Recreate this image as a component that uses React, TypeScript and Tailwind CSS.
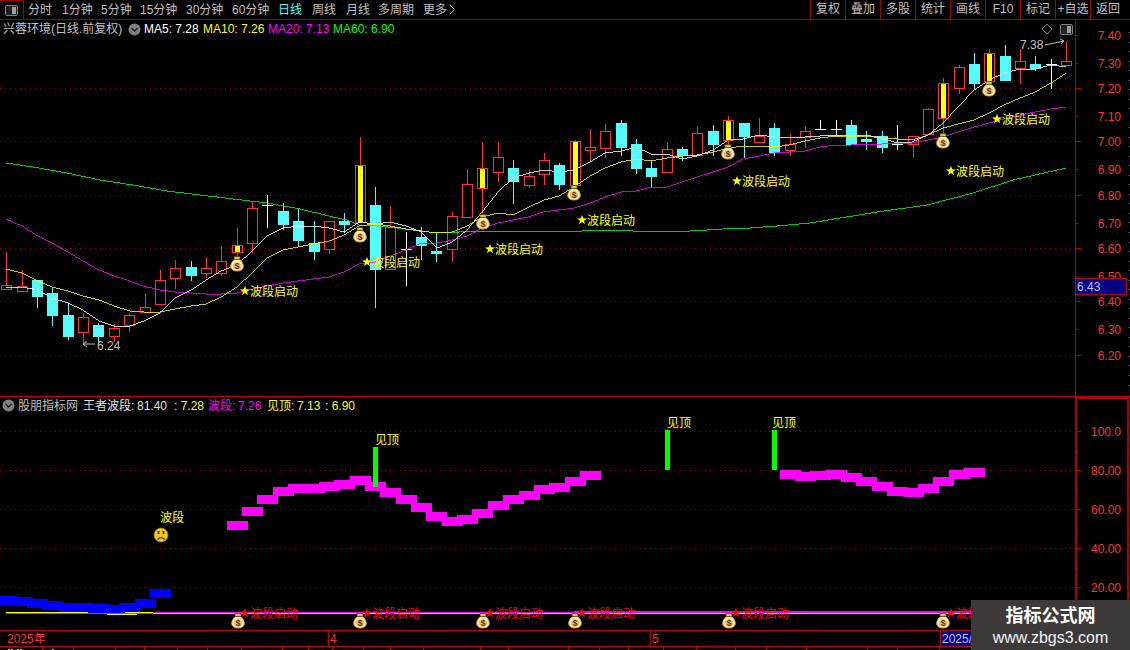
type Kind = "r" | "c" | "y" | "w";
type Candle = [number, number, number, number, Kind];

// hi, body top, body bottom, lo (all in page pixels)
const candles: Candle[] = [
  [252, 285, 289, 289, "r"], [270, 286, 291, 291, "r"], [280, 280, 296, 307, "c"], [288, 293, 315, 325, "c"],
  [303, 315, 336, 339, "c"], [313, 317, 332, 343, "r"], [323, 325, 336, 343, "c"], [324, 328, 336, 341, "r"],
  [313, 315, 325, 331, "r"], [294, 307, 312, 312, "r"], [270, 280, 304, 304, "r"], [260, 268, 278, 288, "r"],
  [261, 267, 275, 280, "c"], [257, 268, 273, 277, "r"], [246, 261, 273, 275, "r"], [228, 245, 252, 257, "y"],
  [202, 208, 243, 252, "r"], [195, 205, 205, 227, "w"], [203, 211, 224, 229, "c"], [208, 221, 240, 245, "c"],
  [221, 243, 251, 259, "c"], [221, 221, 249, 253, "r"], [213, 221, 224, 232, "c"], [137, 165, 222, 222, "y"],
  [187, 205, 269, 307, "c"], [206, 227, 269, 269, "r"], [232, 249, 249, 285, "w"], [227, 237, 245, 259, "c"],
  [233, 251, 253, 261, "c"], [212, 216, 249, 261, "r"], [169, 184, 217, 217, "r"], [142, 168, 188, 213, "y"],
  [142, 157, 172, 181, "r"], [160, 168, 181, 203, "c"], [169, 176, 185, 187, "r"], [153, 160, 174, 184, "r"],
  [163, 165, 184, 189, "c"], [140, 141, 185, 185, "y"], [129, 147, 150, 160, "r"], [124, 131, 148, 157, "r"],
  [120, 123, 147, 155, "c"], [139, 144, 168, 173, "c"], [160, 168, 176, 187, "c"], [142, 149, 172, 172, "r"],
  [147, 149, 155, 160, "c"], [126, 133, 155, 155, "r"], [125, 131, 144, 155, "c"], [116, 120, 140, 147, "y"],
  [123, 123, 136, 157, "c"], [118, 136, 142, 142, "r"], [123, 128, 152, 155, "c"], [134, 144, 150, 155, "r"],
  [126, 131, 137, 147, "r"], [120, 129, 129, 129, "w"], [120, 129, 129, 135, "w"], [120, 125, 144, 144, "c"],
  [131, 139, 141, 149, "c"], [131, 136, 147, 152, "c"], [125, 144, 144, 149, "w"], [136, 136, 144, 157, "r"],
  [108, 109, 134, 134, "r"], [78, 83, 118, 135, "y"], [65, 67, 88, 93, "r"], [53, 64, 83, 88, "c"],
  [49, 53, 81, 81, "y"], [45, 56, 80, 80, "c"], [49, 61, 68, 83, "r"], [56, 64, 68, 70, "c"],
  [59, 64, 64, 88, "w"], [41, 61, 65, 65, "r"],
];

const cx = (i: number) => Math.round(6.3 + 15.36 * i);

const ma5 = "6,287 22,287 38,290 52,298 68,303 83,310 99,321 114,326 130,326 144,321 160,313 175,298 191,290 206,280 221,271 237,265 253,250 267,236 283,228 298,226 313,226 329,228 344,232 359,222 375,224 390,222 406,226 421,232 437,248 452,242 467,230 482,212 498,192 513,178 529,173 544,170 559,172 574,170 590,162 605,153 621,151 636,147 651,154 667,154 682,159 697,156 713,150 728,140 743,139 759,135 774,137 789,138 805,137 820,136 836,135 851,136 866,135 882,138 897,143 912,142 928,135 943,123 958,107 974,90 989,80 1004,73 1020,69 1035,69 1051,65 1066,67";
const ma10 = "6,269 22,273 38,281 52,287 68,291 83,296 99,300 114,306 130,311 144,312 160,312 175,309 191,306 206,304 221,297 237,287 253,272 267,258 283,250 298,247 313,244 329,241 344,235 359,226 375,224 390,226 406,229 421,231 437,233 452,232 467,226 482,217 498,213 513,215 529,207 544,200 559,196 574,187 590,176 605,168 621,162 636,159 651,161 667,158 682,156 697,155 713,152 728,148 743,146 759,146 774,147 789,145 805,141 820,138 836,136 851,136 866,136 882,138 897,139 912,140 928,135 943,128 958,124 974,120 989,113 1004,105 1020,98 1035,92 1051,83 1066,73";
const ma20 = "6,219 22,226 38,236 52,243 68,252 83,261 99,270 114,276 127,280 143,286 160,290 175,292 191,293 206,294 221,294 237,293 253,289 267,286 283,283 298,281 313,279 329,277 344,272 359,264 375,262 390,256 406,250 421,243 437,243 452,240 467,236 482,228 498,223 513,220 528,217 543,212 559,210 574,208 590,203 605,197 621,192 636,191 651,187 667,187 682,182 697,177 713,172 728,167 743,159 759,156 774,153 789,152 805,151 820,147 836,145 851,145 866,144 882,144 897,143 912,143 928,140 943,137 958,132 974,127 989,123 1004,119 1020,115 1035,112 1051,109 1066,107";
const ma60 = "6,163 33,167 67,173 100,180 133,185 167,191 200,195 233,199 267,203 300,209 333,217 347,220 359,225 380,226 413,230 437,233 480,231 550,231 557,232 582,231 628,230 633,231 690,231 723,229 750,228 777,226 810,223 828,220 877,212 927,205 973,193 1013,180 1066,168";

const mainGrid = [88, 141, 195, 248, 301, 355];
const subGrid = [431, 470, 509, 548, 587];

const startLabels: [number, number][] = [[245, 291], [367, 262], [490, 249], [582, 220], [737, 181], [951, 171], [997, 119]];
const mainBags: [number, number][] = [[237, 264], [360, 235], [483, 222], [574, 193], [728, 152], [943, 141], [989, 89]];
const subBags = [238, 360, 483, 575, 729, 943];

const blueBars: [number, number][] = [[0, 596], [1, 597], [2, 599], [3, 601], [4, 603], [5, 603], [6, 604], [7, 605], [8, 603], [9, 599], [10, 589]];
const pinkBars: [number, number][] = [
  [15, 521], [16, 507], [17, 495], [18, 487], [19, 484], [20, 484], [21, 482], [22, 480], [23, 476], [24, 482], [25, 488],
  [26, 495], [27, 503], [28, 512], [29, 517], [30, 515], [31, 509], [32, 501], [33, 495], [34, 491], [35, 485], [36, 483], [37, 477], [38, 471],
  [51, 470], [52, 472], [53, 471], [54, 470], [55, 473], [56, 477], [57, 482], [58, 487], [59, 488], [60, 484], [61, 477], [62, 470], [63, 468],
];

const mainAxis: [string, number][] = [["7.40", 35], ["7.30", 63], ["7.20", 88], ["7.10", 116], ["7.00", 141], ["6.90", 169], ["6.80", 195], ["6.70", 223], ["6.60", 248], ["6.50", 276], ["6.40", 301], ["6.30", 329], ["6.20", 355]];
const subAxis: [string, number][] = [["100.0", 431], ["80.00", 470], ["60.00", 509], ["40.00", 548], ["20.00", 587]];

// label + the step to the next one, the spacing isn't even in the original
const tools: [string, string][] = [
  ["分时", "w-[34px]"], ["1分钟", "w-[39px]"], ["5分钟", "w-[39px]"], ["15分钟", "w-[46px]"], ["30分钟", "w-[46px]"],
  ["60分钟", "w-[46px]"], ["日线", "w-[34px]"], ["周线", "w-[34px]"], ["月线", "w-[32px]"], ["多周期", "w-[45px]"],
];
const actions = ["复权", "叠加", "多股", "统计", "画线", "F10", "标记", "+自选", "返回"];

function Star({ x, y, color }: { x: number; y: number; color: string }) {
  const pts = [];
  for (let k = 0; k < 10; k++) {
    const r = k % 2 === 0 ? 5.2 : 2.1;
    const a = -Math.PI / 2 + (k * Math.PI) / 5;
    pts.push(`${x + r * Math.cos(a)},${y + r * Math.sin(a)}`);
  }
  return <polygon points={pts.join(" ")} fill={color} />;
}

function StartLabel({ x, y, color }: { x: number; y: number; color: string }) {
  return (
    <g>
      <text x={x + 5} y={y + 5} fontSize="12" fill={color}>波段启动</text>
      <Star x={x} y={y} color={color} />
    </g>
  );
}

function MoneyBag({ x, y }: { x: number; y: number }) {
  return (
    <g>
      <path
        d={`M${x - 2.2} ${y - 4.5}C${x - 7.5} ${y - 1} ${x - 8.5} ${y + 7} ${x} ${y + 7}C${x + 8.5} ${y + 7} ${x + 7.5} ${y - 1} ${x + 2.2} ${y - 4.5}Z`}
        fill="#fff3bd"
        stroke="#d9a21c"
      />
      <rect x={x - 3} y={y - 7.5} width="6" height="3" fill="#e2c34a" stroke="#4a3a10" strokeWidth="0.7" />
      <ellipse cx={x} cy={y + 2} rx="4.2" ry="3.6" fill="#e6bd72" />
      <text x={x} y={y + 5} fontSize="8.5" fontWeight="700" textAnchor="middle" fill="#6e2f10">$</text>
    </g>
  );
}

function Candles() {
  return (
    <g shapeRendering="crispEdges">
      {candles.map(([hi, top, bot, lo, kind], i) => {
        const x = cx(i);
        const color = kind === "c" ? "#54fcfc" : kind === "w" ? "#ffffff" : "#ff3232";
        return (
          <g key={i}>
            <line x1={x + 0.5} x2={x + 0.5} y1={hi} y2={lo + 1} stroke={color} />
            {kind === "w" && <rect x={x - 5} y={top} width="11" height="1" fill={color} />}
            {kind === "c" && <rect x={x - 5} y={top} width="11" height={bot - top + 1} fill={color} />}
            {(kind === "r" || kind === "y") && (
              <rect x={x - 4.5} y={top + 0.5} width="10" height={bot - top} fill="#000" stroke={color} />
            )}
            {kind === "y" && <rect x={x - 2} y={top + 1} width="5" height={bot - top - 1} fill="#ffff00" />}
          </g>
        );
      })}
    </g>
  );
}

function SidebarIcon() {
  return (
    <svg width="13" height="11" viewBox="0 0 13 11">
      <rect x="0.5" y="0.5" width="12" height="10" rx="1.5" fill="#222" stroke="#808080" />
      <rect x="7" y="2" width="4" height="7" fill="#a0a0a0" />
    </svg>
  );
}

function DropCircle() {
  return (
    <svg width="13" height="13" viewBox="0 0 13 13" className="shrink-0">
      <circle cx="6.5" cy="6.5" r="6" fill="#808080" />
      <path d="M3.5 5l3 3 3-3" fill="none" stroke="#222" strokeWidth="1.4" />
    </svg>
  );
}

function Tab({ children }: { children: string }) {
  return <span className="w-[35px] shrink-0 text-center border-l border-[#a00000] leading-[19px]">{children}</span>;
}

export default function App() {
  return (
    <div className="relative w-[1130px] h-[650px] overflow-hidden bg-black text-[12px] leading-none text-[#c0c0c0] [font-family:'Liberation_Sans','Noto_Sans_CJK_SC',sans-serif]">
      {/* toolbar */}
      <div className="flex h-[20px] items-center border-b border-[#a00000]">
        <div className="flex h-[19px] w-[24px] items-center justify-center border-t border-r border-[#a00000]">
          <SidebarIcon />
        </div>
        <div className="flex items-center pl-[4px]">
          {tools.map(([t, w]) => (
            <span key={t} className={`${w} whitespace-nowrap ${t === "日线" ? "text-[#54fcfc]" : ""}`}>{t}</span>
          ))}
          <span className="flex items-center gap-[2px]">
            更多
            <svg width="7" height="11" viewBox="0 0 7 11"><path d="M1 1l4.5 4.5L1 10" fill="none" stroke="#c0c0c0" /></svg>
          </span>
        </div>
        <div className="ml-auto flex h-full items-center pr-[5px]">
          {actions.map((t) => <Tab key={t}>{t}</Tab>)}
        </div>
      </div>

      {/* price panel */}
      <div className="flex h-[376px]">
        <div className="flex w-[1075px] flex-col">
          <div className="flex h-[18px] items-center pl-[3px]">
            <span className="w-[125px]">兴蓉环境(日线.前复权)</span>
            <DropCircle />
            <span className="ml-[3px] w-[59px] text-white">MA5: 7.28</span>
            <span className="w-[65px] text-[#ffff00]">MA10: 7.26</span>
            <span className="w-[65px] text-[#ff00ff]">MA20: 7.13</span>
            <span className="text-[#00ff00]">MA60: 6.90</span>
            <svg width="12" height="12" viewBox="0 0 12 12" className="ml-auto mr-[7px]">
              <path d="M6 1l5 5-5 5-5-5z" fill="none" stroke="#808080" />
            </svg>
            <div className="mr-[2px]"><SidebarIcon /></div>
          </div>
          <svg width="1075" height="358" viewBox="0 38 1075 358">
            {mainGrid.map((y) => (
              <line key={y} x1="0" x2="1075" y1={y + 0.5} y2={y + 0.5} stroke="#900000" strokeDasharray="1 4" shapeRendering="crispEdges" />
            ))}
            <Candles />
            <g fill="none" shapeRendering="crispEdges" strokeWidth="0.8">
              <polyline points={ma60} stroke="#00ff00" />
              <polyline points={ma20} stroke="#ff00ff" />
              <polyline points={ma10} stroke="#ffff00" />
              <polyline points={ma5} stroke="#ffffff" />
            </g>
            {mainBags.map(([x, y]) => <MoneyBag key={x} x={x} y={y} />)}
            {startLabels.map(([x, y]) => <StartLabel key={x} x={x} y={y} color="#ffff00" />)}
            <text x="1020" y="49" fontSize="12" fill="#c0c0c0">7.38</text>
            <path d="M1045 45l19-4m-4-2l4 2-3 3" fill="none" stroke="#c0c0c0" />
            <path d="M95 344H83m4-3l-4 3 4 3" fill="none" stroke="#c0c0c0" />
            <text x="97" y="350" fontSize="12" fill="#c0c0c0">6.24</text>
          </svg>
        </div>
        <svg width="55" height="376" viewBox="1075 20 55 376">
          <g shapeRendering="crispEdges">
            <rect x="1075" y="20" width="1" height="376" fill="#b00000" />
            {mainAxis.map(([label, y]) => (
              <rect key={label} x="1075" y={y} width={mainGrid.includes(y) ? 6 : 3} height="1" fill="#b00000" />
            ))}
            {[32, 42, 51, 61, 70, 80, 89, 99, 108, 127, 137, 146, 156, 165, 175, 184, 194, 203, 213, 222, 232, 242, 251, 261, 270, 280, 289, 299, 308, 318, 327, 337, 346, 356, 365, 375, 385].map((y) => (
              <rect key={y} x="1129" y={y} width="1" height="1" fill="#a0a0a0" />
            ))}
          </g>
          {mainAxis.map(([label, y]) => (
            <text key={label} x="1121" y={y + 5} fontSize="12" textAnchor="end" fill="#ff3232">{label}</text>
          ))}
          <rect x="1075.5" y="278.5" width="51" height="16" fill="#000080" stroke="#c00000" shapeRendering="crispEdges" />
          <text x="1077" y="291" fontSize="12" fill="#c0c0ff">6.43</text>
        </svg>
      </div>

      {/* indicator panel */}
      <div className="flex h-[234px] border-t border-[#c00000]">
        <div className="flex w-[1075px] flex-col">
          <div className="flex h-[17px] items-center pl-[2px]">
            <DropCircle />
            <span className="ml-[3px] w-[65px]">股朋指标网</span>
            <span className="w-[54px] text-[#e0e0e0]">王者波段:</span>
            <span className="w-[37px] text-[#e0e0e0]">81.40</span>
            <span className="w-[34px] text-[#ffff00]">: 7.28</span>
            <span className="w-[30px] text-[#ff00ff]">波段:</span>
            <span className="w-[29px] text-[#ff00ff]">7.26</span>
            <span className="w-[30px] text-[#ffff00]">见顶:</span>
            <span className="w-[28px] text-[#ffff00]">7.13</span>
            <span className="text-[#ffff00]">: 6.90</span>
          </div>
          <svg width="1075" height="216" viewBox="0 414 1075 216">
            {subGrid.map((y) => (
              <line key={y} x1="0" x2="1075" y1={y + 0.5} y2={y + 0.5} stroke="#900000" strokeDasharray="1 4" shapeRendering="crispEdges" />
            ))}
            <g shapeRendering="crispEdges">
              {blueBars.map(([i, y]) => <rect key={i} x={cx(i) - 10} y={y} width="21" height="9" fill="#0000ff" />)}
              {pinkBars.map(([i, y]) => <rect key={i} x={cx(i) - 10} y={y} width="21" height="9" fill="#ff00ff" />)}
              <rect x="373" y="447" width="5" height="40" fill="#00ff00" />
              <rect x="665" y="430" width="5" height="40" fill="#00ff00" />
              <rect x="772" y="430" width="5" height="40" fill="#00ff00" />
              {/* flat lines along the bottom */}
              <rect x="6" y="613" width="101" height="1" fill="#ff00ff" />
              <rect x="6" y="612" width="82" height="1" fill="#ffff00" />
              <rect x="107" y="614" width="30" height="1" fill="#ffff00" />
              <rect x="125" y="612" width="28" height="1" fill="#ffff00" />
              <rect x="107" y="613" width="46" height="1" fill="#ff00ff" />
              <rect x="153" y="612" width="421" height="1" fill="#ff00ff" />
              <rect x="574" y="611" width="492" height="2" fill="#ff00ff" />
              <rect x="153" y="613" width="913" height="1" fill="#ffff00" />
            </g>
            <text x="375" y="444" fontSize="12" fill="#ffff00">见顶</text>
            <text x="667" y="427" fontSize="12" fill="#ffff00">见顶</text>
            <text x="772" y="427" fontSize="12" fill="#ffff00">见顶</text>
            <text x="160" y="522" fontSize="12" fill="#ffff00">波段</text>
            <circle cx="161" cy="535" r="7" fill="#f0c818" stroke="#a88410" strokeWidth="0.6" />
            <path d="M158.5 531v3M163.5 531v3" stroke="#2a2000" strokeWidth="1.6" />
            <path d="M157.5 539.5q3.5-4 7 0" fill="none" stroke="#2a2000" strokeWidth="1.2" />
            {subBags.map((x) => <MoneyBag key={x} x={x} y={621} />)}
            {[245, 367, 490, 582, 736, 951].map((x) => <StartLabel key={x} x={x} y={613} color="#ff0000" />)}
          </svg>
        </div>
        <svg width="55" height="233" viewBox="1075 397 55 233">
          <g shapeRendering="crispEdges">
            <rect x="1075" y="397" width="52" height="2" fill="#b00000" />
            <rect x="1075" y="397" width="2" height="233" fill="#b00000" />
            <rect x="1127" y="397" width="2" height="233" fill="#b00000" />
            {subAxis.map(([label, y]) => <rect key={label} x="1075" y={y} width="6" height="1" fill="#b00000" />)}
            {[451, 490, 529, 568].map((y) => <rect key={y} x="1075" y={y} width="3" height="1" fill="#b00000" />)}
          </g>
          {subAxis.map(([label, y]) => (
            <text key={label} x="1121" y={y + 5} fontSize="12" textAnchor="end" fill="#ff3232">{label}</text>
          ))}
        </svg>
      </div>

      {/* date axis */}
      <div className="relative flex h-[17px] border-y border-[#c00000] text-[#ff3232]">
        <span className="flex w-[328px] items-center pl-[7px]">2025年</span>
        <span className="flex w-[322px] items-center border-l border-[#c00000] pl-[1px]">4</span>
        <span className="flex w-[290px] items-center border-l border-[#c00000] pl-[1px]">5</span>
        <span className="flex flex-1 items-center border-x border-[#c00000] bg-[#000080] pl-[1px] text-[#c0c0ff]">2025/</span>
      </div>
      <svg width="1130" height="3" viewBox="0 647 1130 3" className="block">
        <g shapeRendering="crispEdges">
          {[42, 73, 115, 144, 177, 207, 241, 282, 308, 332, 363, 390, 423, 480, 508, 568, 599, 628, 663, 696, 735, 766, 806, 867, 897, 939].map((x) => (
            <rect key={x} x={x} y="647" width="1" height="3" fill="#c00000" />
          ))}
          {[8, 11, 17, 20, 52].map((x) => (
            <rect key={x} x={x} y="649" width="2" height="1" fill="#c0c0c0" />
          ))}
        </g>
      </svg>

      {/* watermark */}
      <div className="absolute left-[971px] top-[600px] flex h-[50px] w-[159px] flex-col items-center bg-[#3e3a39] pt-[6px] text-white">
        <span className="text-[18px] leading-[20px] font-bold">指标公式网</span>
        <span className="mt-[3px] text-[16px] leading-[18px] text-[#eef6ff]">www.zbgs3.com</span>
      </div>
    </div>
  );
}
